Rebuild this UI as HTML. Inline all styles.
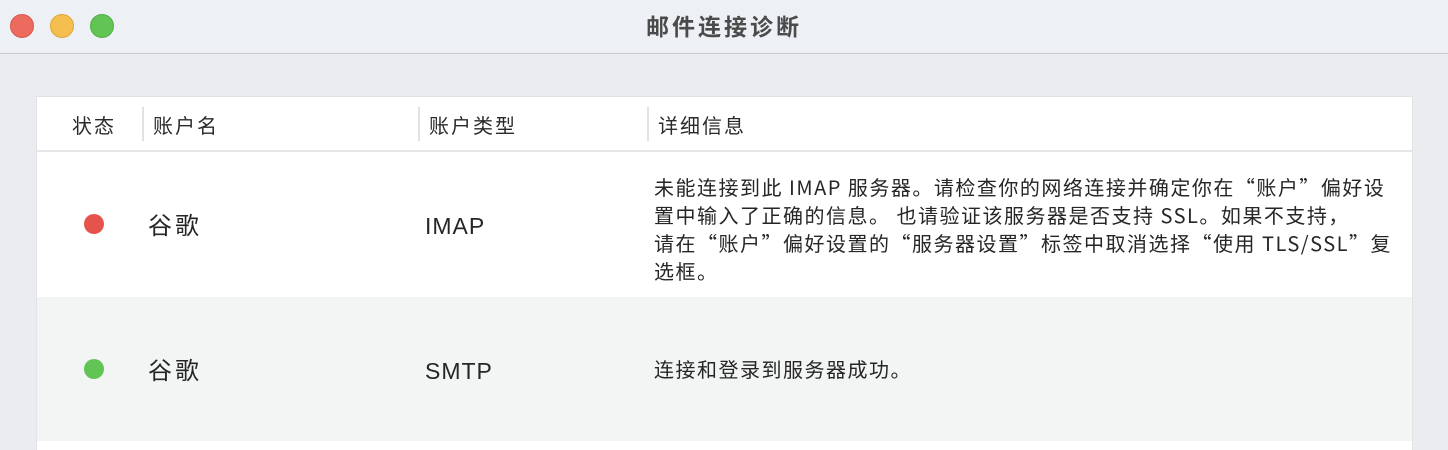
<!DOCTYPE html>
<html><head><meta charset="utf-8"><style>
*{margin:0;padding:0;box-sizing:border-box}
body{width:1448px;height:450px;overflow:hidden;background:#ebecf0;font-family:"Liberation Sans","Noto Sans CJK SC",sans-serif;color:#262626;position:relative}
.tb{position:absolute;left:0;top:0;width:1448px;height:54px;background:#edf0f5;border-bottom:1px solid #c9cacd}
.tl{position:absolute;top:14px;width:24px;height:24px;border-radius:50%}
.title{position:absolute;left:0;width:1448px;top:8px;line-height:34px;text-align:center;font-size:23px;letter-spacing:3px;font-weight:bold;color:#4b4b4b;font-family:"Noto Sans CJK SC",sans-serif}
.tbl{position:absolute;left:36px;top:96px;width:1377px;height:354px;background:#fff;border:1px solid #e2e3e5;border-bottom:none}
.hd{position:absolute;left:0;top:0;width:100%;height:55px;border-bottom:2px solid #e5e6e8}
.h{position:absolute;top:14px;line-height:28px;font-size:20px;letter-spacing:2px;color:#2a2a2a;font-family:"Noto Sans CJK SC",sans-serif}
.sep{position:absolute;top:10px;width:2px;height:34px;background:#e2e2e2}
.row{position:absolute;left:0;width:100%}
.dot{position:absolute;left:47px;width:20px;height:20px;border-radius:50%}
.nm{position:absolute;left:111px;font-size:24px;letter-spacing:3px;line-height:32px;font-family:"Noto Sans CJK SC",sans-serif}
.tp{position:absolute;left:388px;font-size:23px;letter-spacing:1px}
.dt{position:absolute;left:617px;font-size:20px;letter-spacing:1.5px;line-height:28px;white-space:nowrap;font-family:"Noto Sans CJK SC",sans-serif}
</style></head><body>
<div class="tb">
<div class="tl" style="left:10px;background:#ec6a5e;border:1px solid #d6564b"></div>
<div class="tl" style="left:50px;background:#f5bf4f;border:1px solid #dea33a"></div>
<div class="tl" style="left:90px;background:#61c454;border:1px solid #4fae43"></div>
<div class="title">邮件连接诊断</div>
</div>
<div class="tbl">
<div class="hd">
<div class="h" style="left:35px">状态</div>
<div class="sep" style="left:105px"></div>
<div class="h" style="left:116px">账户名</div>
<div class="sep" style="left:381px"></div>
<div class="h" style="left:392px">账户类型</div>
<div class="sep" style="left:610px"></div>
<div class="h" style="left:621px">详细信息</div>
</div>
<div class="row" style="top:56px;height:144px;background:#fff">
<div class="dot" style="top:61px;background:#e5534b"></div>
<div class="nm" style="top:55px">谷歌</div>
<div class="tp" style="top:60px">IMAP</div>
<div class="dt" style="top:20px">未能连接到此 IMAP 服务器。请检查你的网络连接并确定你在“账户”偏好设<br>置中输入了正确的信息。 也请验证该服务器是否支持 SSL。如果不支持，<br>请在“账户”偏好设置的“服务器设置”标签中取消选择“使用 TLS/SSL”复<br>选框。</div>
</div>
<div class="row" style="top:200px;height:144px;background:#f3f4f4">
<div class="dot" style="top:62px;background:#61c454"></div>
<div class="nm" style="top:56px">谷歌</div>
<div class="tp" style="top:61px">SMTP</div>
<div class="dt" style="top:58px">连接和登录到服务器成功。</div>
</div>
</div>
</body></html>
